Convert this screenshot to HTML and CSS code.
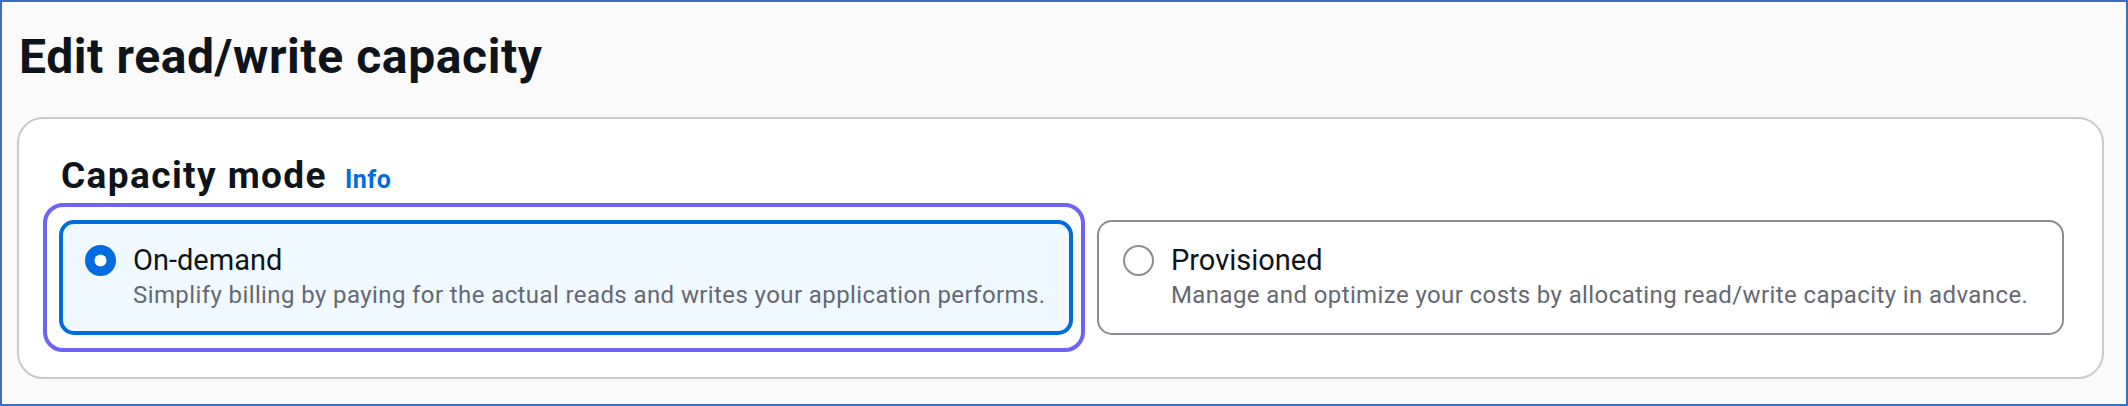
FILE: index.html
```html
<!DOCTYPE html>
<html lang="en">
<head>
<meta charset="utf-8">
<title>Edit read/write capacity</title>
<link rel="stylesheet" href="styles.css">
</head>
<body>
<main class="frame">
  <h1 class="title">Edit read/write capacity</h1>
  <section class="card">
    <div class="card-header">
      <h2 class="card-title">Capacity mode</h2>
      <a class="info-link">Info</a>
    </div>
    <div class="tiles">
      <div class="focus-ring">
        <div class="tile tile-selected">
          <svg class="radio" width="31" height="31" viewBox="0 0 31 31" aria-hidden="true">
            <circle cx="15.5" cy="15.5" r="15.5" fill="#006ce0"/>
            <circle cx="15.5" cy="15.5" r="6" fill="#ffffff"/>
          </svg>
          <div class="tile-text">
            <div class="tile-label">On-demand</div>
            <div class="tile-desc">Simplify billing by paying for the actual reads and writes your application performs.</div>
          </div>
        </div>
      </div>
      <div class="tile tile-plain">
        <svg class="radio" width="31" height="31" viewBox="0 0 31 31" aria-hidden="true">
          <circle cx="15.5" cy="15.5" r="14.5" fill="#ffffff" stroke="#8c8c94" stroke-width="2"/>
        </svg>
        <div class="tile-text">
          <div class="tile-label">Provisioned</div>
          <div class="tile-desc">Manage and optimize your costs by allocating read/write capacity in advance.</div>
        </div>
      </div>
    </div>
  </section>
</main>
</body>
</html>
```

FILE: styles.css
```css
* {
  box-sizing: border-box;
}

html, body {
  margin: 0;
  padding: 0;
}

body {
  width: 2128px;
  height: 406px;
  overflow: hidden;
  font-family: Roboto, "Noto Sans", Arial, sans-serif;
  color: #0f141a;
}

.frame {
  width: 2128px;
  height: 406px;
  border: 2px solid #3b6cc7;
  background: #fafafa;
  padding: 0 22px 0 15px;
}

.title {
  margin: 27px 0 0 2px;
  font-size: 48px;
  line-height: 56px;
  font-weight: 700;
  letter-spacing: 0.6px;
}

.card {
  margin-top: 32px;
  background: #ffffff;
  border: 2px solid #c9c9cf;
  border-radius: 26px;
  padding: 37px 38px 25px 24px;
}

.card-header {
  display: flex;
  align-items: baseline;
  gap: 18px;
  padding-left: 18px;
}

.card-title {
  margin: 0;
  font-size: 37px;
  line-height: 40px;
  font-weight: 700;
  letter-spacing: 1.4px;
}

.info-link {
  font-size: 25px;
  font-weight: 700;
  letter-spacing: 0.5px;
  color: #006ce0;
}

.tiles {
  display: flex;
  gap: 12px;
  margin-top: 7px;
}

.focus-ring {
  flex: 0 0 1042px;
  border: 4px solid #6f63f5;
  border-radius: 20px;
  padding: 13px 8px 13px 12px;
}

.tile {
  display: flex;
  align-items: flex-start;
  gap: 17px;
  height: 115px;
  border-radius: 15px;
  padding-top: 22px;
}

.tile-selected {
  border: 4px solid #006ce0;
  background: #f0f9ff;
  padding-left: 22px;
  padding-top: 18px;
}

.tile-plain {
  flex: 1;
  align-self: center;
  border: 2px solid #8c8c94;
  background: #ffffff;
  padding-left: 24px;
  padding-top: 20px;
}

.radio {
  flex: 0 0 31px;
  margin-top: 3px;
}

.tile-text {
  display: flex;
  flex-direction: column;
}

.tile-label {
  font-size: 29px;
  line-height: 36px;
  color: #0f141a;
}

.tile-desc {
  font-size: 24px;
  line-height: 34px;
  letter-spacing: 0.4px;
  color: #656871;
}
```
